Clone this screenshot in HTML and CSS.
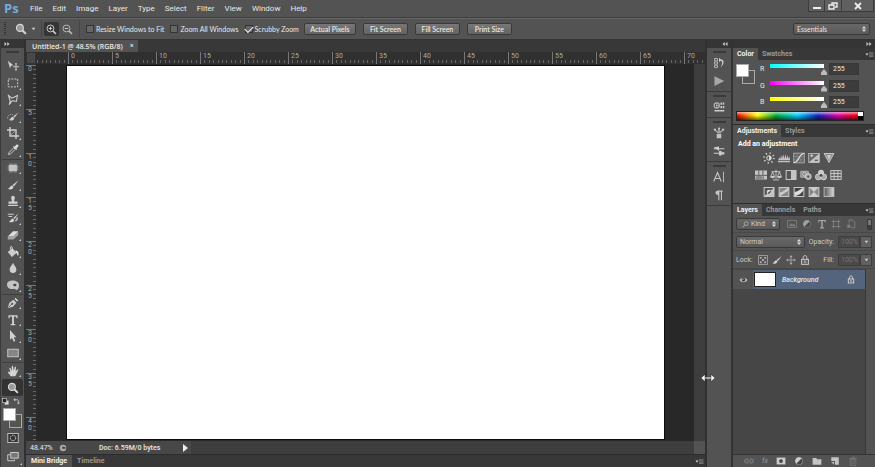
FILE: index.html
```html
<!DOCTYPE html>
<html lang="en">
<head>
<meta charset="utf-8">
<title>Untitled-1</title>
<link rel="stylesheet" href="styles.css">
</head>
<body>
<svg class="defs" aria-hidden="true">
  <symbol id="lens" viewBox="0 0 16 16"><circle cx="6.5" cy="6.5" r="4.6" fill="#999" stroke="#d8d8d8" stroke-width="1.5"/><path d="M10 10l4.5 4.5" stroke="#d8d8d8" stroke-width="2.6"/></symbol>
  <symbol id="lens-in" viewBox="0 0 16 16"><circle cx="6.5" cy="6.5" r="5" fill="none" stroke="#ccc" stroke-width="1.4"/><path d="M10 10l4.5 4.5" stroke="#ccc" stroke-width="2.4"/><path d="M4 6.5h5M6.500 4v5" stroke="#ddd" stroke-width="1.3"/></symbol>
  <symbol id="lens-out" viewBox="0 0 16 16"><circle cx="6.500" cy="6.500" r="5" fill="none" stroke="#bbb" stroke-width="1.4"/><path d="M10 10l4.500 4.500" stroke="#bbb" stroke-width="2.4"/><path d="M4 6.500h5" stroke="#ddd" stroke-width="1.300"/></symbol>
  <symbol id="move" viewBox="0 0 16 16"><path d="M1 1l7.500 6-3 .7L4 11 1 1z" fill="#ccc"/><path d="M12 5v8M8 9h8" stroke="#ccc" stroke-width="1.300"/><path d="M12 3.500l1.700 2.300h-3.400zM12 14.500l1.700-2.300h-3.400z" fill="#ccc"/></symbol>
  <symbol id="marquee" viewBox="0 0 16 16"><rect x="1.700" y="2.700" width="12.500" height="10.500" fill="none" stroke="#d0d0d0" stroke-width="1.300" stroke-dasharray="2.600 1.600"/></symbol>
  <symbol id="lasso" viewBox="0 0 16 16"><path d="M2 2l4.500 3.500L14 2l-1.500 8-5-1-3 1.500zM4.500 10.500c-2 1-.5 3 .5 1.500s-1.500-1.500-2 2.500" fill="none" stroke="#d0d0d0" stroke-width="1.400"/></symbol>
  <symbol id="quick" viewBox="0 0 16 16"><path d="M15 2L8.500 7l1.500 2zM8 7.500c-3 .5-3 3.500-5.500 4.500 3.500 1.500 7 0 7-2.500z" fill="#d0d0d0"/><path d="M1 10C0 6 4 4 8 5" fill="none" stroke="#ccc" stroke-dasharray="1.500 1.500"/></symbol>
  <symbol id="crop" viewBox="0 0 16 16"><path d="M4 0v12h12M0 4h12v12" fill="none" stroke="#d0d0d0" stroke-width="1.800"/><path d="M5 11l6.500-6.500" stroke="#aaa"/></symbol>
  <symbol id="dropper" viewBox="0 0 16 16"><path d="M2 14l1-3 6-6 2 2-6 6z" fill="none" stroke="#ccc" stroke-width="1.300"/><path d="M8 3.500L12.500 8l1-1-1-1L15 3.500C16 1.500 14 0 12.500 1L10 3.500l-1-1z" fill="#ddd"/></symbol>
  <symbol id="heal" viewBox="0 0 16 16"><path d="M4 2v12M6.500 2v12M9.500 2v12M12 2v12M1 5.500h14M1 8h14M1 10.500h14" stroke="#bbb" stroke-width="1.200"/><rect x="3" y="4" width="10" height="8" rx="1" fill="#c4c4c4"/></symbol>
  <symbol id="brush" viewBox="0 0 16 16"><path d="M15.500 1.500L7.500 8l1.700 2zM7 8.500c-2.500 0-2.500 3-6 4.500 3.500 2 7.500.5 7.500-2.500z" fill="#d4d4d4"/></symbol>
  <symbol id="stamp" viewBox="0 0 16 16"><path d="M5.500 3.500a2.500 2.500 0 015 0c0 2-1 2.500-1 5H14v3H2v-3h4.500c0-2.500-1-3-1-5zM1.500 13h13v1.500h-13z" fill="#d0d0d0"/></symbol>
  <symbol id="history" viewBox="0 0 16 16"><path d="M15.500 1.500L8.500 8l1.500 1.500zM8 8.500c-2.500 0-2.500 3-5.500 4.500 3.500 1.500 7 .5 7-2.500z" fill="#d4d4d4"/><path d="M1 3h8M2 6h5M11 12c2.500-1 3-3 2.500-5" fill="none" stroke="#ccc" stroke-width="1.600"/></symbol>
  <symbol id="eraser" viewBox="0 0 16 16"><path d="M1 10l7-7h7L8.500 10z" fill="#ddd"/><path d="M1 10h7.500v4H1zM8.500 10L15 3v5l-6.500 6z" fill="#a4a4a4"/></symbol>
  <symbol id="bucket" viewBox="0 0 16 16"><path d="M1 8l6-5 6 6-6.500 5.500z" fill="#ccc"/><path d="M7 8V2.500C7 0 4.500 0 4.500 2.500V5" fill="none" stroke="#ddd" stroke-width="1.200"/><path d="M11 6c4 0 5 3 4 7-2 0-1-3-3-4z" fill="#ddd"/></symbol>
  <symbol id="drop" viewBox="0 0 16 16"><path d="M8 1c1.500 4 4.500 5.500 4.500 9a4.500 4.500 0 01-9 0C3.500 6.500 6.500 5 8 1z" fill="#cfcfcf"/></symbol>
  <symbol id="sponge" viewBox="0 0 16 16"><path d="M0 7c0-7 16-7 16 1 0 4-1 6.500-3.500 6.500-1.500 0-1-1.500-2.500-1.500C5 14 0 13 0 7z" fill="#c4c4c4"/><ellipse cx="10.500" cy="8" rx="2.200" ry="1.700" fill="#444"/></symbol>
  <symbol id="pen" viewBox="0 0 16 16"><path d="M1 15L3 8l5.500-4.500 4 4L8 13z" fill="#ccc"/><path d="M9.500 2.500L11.500.5l4 4-2 2zM2 14l4.500-4.500" fill="#ddd" stroke="#444"/><circle cx="7" cy="9" r="1.200" fill="#444"/></symbol>
  <symbol id="type" viewBox="0 0 16 16"><path d="M2 1.500h12v4h-1.300L12 3.200H9.200v10l2 .5V15H4.800v-1.300l2-.5v-10H4l-.7 2.300H2z" fill="#d4d4d4"/></symbol>
  <symbol id="arrow" viewBox="0 0 16 16"><path d="M4 0l8.500 9.500H9l2 5-2 1-2.300-5L4 13z" fill="#d0d0d0"/></symbol>
  <symbol id="rect" viewBox="0 0 16 16"><rect x="1" y="3" width="14" height="10" fill="#858585" stroke="#c4c4c4" stroke-width="1.300"/></symbol>
  <symbol id="hand" viewBox="0 0 16 16"><path d="M5 15L1 9.500l1-1L4.500 10 3 4l1.500-.5L6.500 8 6.300 1.500 8 1l1 6.500L10.500 2l1.500.5-.5 6L14 5.500l1.200.8L12.500 12 11 15z" fill="#d4d4d4"/></symbol>
  <symbol id="flip" viewBox="0 0 16 16"><path d="M4 4h5c3 0 4 2 4 6" fill="none" stroke="#ccc" stroke-width="2"/><path d="M5 0v8L1 4zM9 10h7l-3.500 5z" fill="#ccc"/></symbol>
  <symbol id="default" viewBox="0 0 16 16"><rect x="6" y="6" width="9" height="9" fill="#ddd"/><rect x="1.500" y="1.500" width="9" height="9" fill="#222" stroke="#ccc" stroke-width="1.500"/></symbol>
  <symbol id="mask" viewBox="0 0 16 16"><rect x="1" y="2" width="14" height="12" fill="#333" stroke="#bbb" stroke-width="1.300"/><circle cx="8" cy="8" r="3.600" fill="none" stroke="#ddd" stroke-width="1.300" stroke-dasharray="2 1"/></symbol>
  <symbol id="screens" viewBox="0 0 16 16"><rect x="5" y="2" width="10" height="7.500" fill="#777" stroke="#ccc" stroke-width="1.300"/><path d="M4 5H1v8h9v-2" fill="none" stroke="#ccc" stroke-width="1.300"/></symbol>
  <symbol id="hist" viewBox="0 0 16 16"><path d="M2 2h4v3H2zM2 6.500h4v3H2zM2 11h4v3H2z" fill="none" stroke="#bbb" stroke-width="1.200"/><path d="M8 1v6l2-2c3 0 3 4 0 9 6-5 5-11 0-11z" fill="#ccc"/></symbol>
  <symbol id="play" viewBox="0 0 16 16"><path d="M2 1.500L15 8 2 14.500z" fill="#a8a8a8"/></symbol>
  <symbol id="bridge" viewBox="0 0 16 16"><circle cx="5" cy="6" r="3.500" fill="none" stroke="#bbb" stroke-width="1.400"/><path d="M4 6h4M5 4v5" stroke="#bbb"/><path d="M10 2h2v3h-2zM13 2h2v3h-2zM10 6.500h2v3h-2zM13 6.500h2v3h-2zM2 12h13v2H2z" fill="#ccc"/></symbol>
  <symbol id="brushes" viewBox="0 0 16 16"><path d="M5 9h6v6H5zM7 8L7.300 3h1.400L9 8zM6 8L2 4l1-1 4 4zM10 8l4-4-1-1-4 4z" fill="#c4c4c4"/><circle cx="2.500" cy="3.500" r="1.500" fill="#c4c4c4"/><circle cx="13.500" cy="3.500" r="1.500" fill="#c4c4c4"/><circle cx="8" cy="2" r="1.500" fill="#c4c4c4"/></symbol>
  <symbol id="presets" viewBox="0 0 16 16"><path d="M1 5h14M1 11h14" stroke="#ccc" stroke-width="1.400"/><path d="M1 3l7-1v6zM8 8h3.500v6H8zM11 9.500h4v3h-4z" fill="#ccc"/></symbol>
  <symbol id="char" viewBox="0 0 16 16"><path d="M1 14L6 2l5 12M3 10h6" fill="none" stroke="#c4c4c4" stroke-width="1.500"/><path d="M14 1v14" stroke="#bbb" stroke-width="1.300"/></symbol>
  <symbol id="para" viewBox="0 0 16 16"><path d="M13 2H7C2 2 2 8 7 8v7h1.500V3.500h2V15H12V3.500h1z" fill="#c4c4c4"/></symbol>
  <symbol id="sun" viewBox="0 0 16 16"><circle cx="8" cy="8" r="6.500" fill="none" stroke="#ccc" stroke-width="2.500" stroke-dasharray="1.600 3.500"/><circle cx="8" cy="8" r="3" fill="none" stroke="#ddd" stroke-width="1.300"/><path d="M8 5a3 3 0 010 6z" fill="#ddd"/></symbol>
  <symbol id="levels" viewBox="0 0 16 16"><path d="M0 11L2 7l1 3 1-6 1.500 5L7 3l1.500 6L10 3l1.500 6L13 4l1 5 1.500-3L16 11zM0 12h16v1.500H0z" fill="#c4c4c4"/></symbol>
  <symbol id="curves" viewBox="0 0 16 16"><rect x="1" y="1.500" width="14" height="13" fill="#666" stroke="#bbb"/><path d="M5.500 2v12M10.500 2v12M1 6h14M1 10.500h14" stroke="#888"/><path d="M1 14C9 14 7 2 15 2" fill="none" stroke="#eee" stroke-width="1.500"/></symbol>
  <symbol id="exposure" viewBox="0 0 16 16"><rect x="1" y="2" width="14" height="12" fill="#666" stroke="#ccc"/><path d="M15 2v12H1z" fill="#c4c4c4"/><path d="M3 5h4M5 3v4" stroke="#eee"/><path d="M9 11h4" stroke="#333" stroke-width="1.300"/></symbol>
  <symbol id="vibrance" viewBox="0 0 16 16"><path d="M1.500 2h13L8 14z" fill="#888" stroke="#ccc" stroke-width="1.300"/><path d="M5 4h6L8 11z" fill="#ccc"/></symbol>
  <symbol id="hue" viewBox="0 0 16 16"><path d="M0 2h16v12H0z" fill="#c4c4c4"/><path d="M5 2v6M10.500 2v6M0 8.500h16M5 10v3M11 10v3" stroke="#555" stroke-width="1.200"/><path d="M1 9.500h9v4H1z" fill="#888"/></symbol>
  <symbol id="scales" viewBox="0 0 16 16"><path d="M8 1v12M2 3.500h12M4 14.500h8M3.500 4L1 10h5zM12.500 4L10 10h5z" fill="none" stroke="#ccc" stroke-width="1.200"/><path d="M0 10h7c-1 3-6 3-7 0zM9 10h7c-1 3-6 3-7 0z" fill="#ccc"/></symbol>
  <symbol id="bw" viewBox="0 0 16 16"><rect x="1.500" y="2" width="13" height="12" fill="#555" stroke="#ccc" stroke-width="1.300"/><path d="M8 2h7v12H8z" fill="#c4c4c4"/></symbol>
  <symbol id="photo" viewBox="0 0 16 16"><path d="M1 3h10v8H1z" fill="#888" stroke="#ccc"/><circle cx="6" cy="7" r="2.500" fill="none" stroke="#ddd"/><circle cx="11" cy="10" r="4" fill="#aaa" stroke="#ddd"/><circle cx="11" cy="10" r="1.500" fill="#555"/></symbol>
  <symbol id="mixer" viewBox="0 0 16 16"><circle cx="8" cy="5" r="4" fill="#ccc"/><circle cx="4.500" cy="10.500" r="4" fill="#aaa" stroke="#ddd"/><circle cx="11.500" cy="10.500" r="4" fill="#aaa" stroke="#ddd"/><circle cx="8" cy="8.500" r="1.800" fill="#444"/></symbol>
  <symbol id="lut" viewBox="0 0 16 16"><path d="M1 2h14v12H1zM1 6h14M1 10h14M5.500 2v12M10.500 2v12" fill="#666" stroke="#ccc" stroke-width="1.200"/></symbol>
  <symbol id="invert" viewBox="0 0 16 16"><rect x="1.500" y="2" width="13" height="12" fill="#555" stroke="#ccc" stroke-width="1.300"/><path d="M15 2v12H1z" fill="#c4c4c4"/><circle cx="8" cy="8" r="3" fill="#ddd"/><path d="M10 6a3 3 0 01-4 4z" fill="#333"/></symbol>
  <symbol id="poster" viewBox="0 0 16 16"><rect x="1.500" y="2" width="13" height="12" fill="#888" stroke="#ccc" stroke-width="1.300"/><path d="M2 9l5-2 7-5v4L8 10l-6 4z" fill="#ccc"/></symbol>
  <symbol id="thresh" viewBox="0 0 16 16"><rect x="1.500" y="2" width="13" height="12" fill="#444" stroke="#ccc" stroke-width="1.300"/><path d="M2 8l4-1 3-2 5-3v4L9 11l-7 3z" fill="#ddd"/></symbol>
  <symbol id="selective" viewBox="0 0 16 16"><rect x="1.500" y="2" width="13" height="12" fill="#888" stroke="#ccc" stroke-width="1.300"/><path d="M2 2l6 6 6-6z" fill="#ccc"/><path d="M2 14l6-6 6 6z" fill="#ccc"/></symbol>
  <symbol id="gradmap" viewBox="0 0 16 16"><defs><linearGradient id="gm"><stop stop-color="#555"/><stop offset="1" stop-color="#ddd"/></linearGradient></defs><rect x="1.500" y="2" width="13" height="12" fill="url(#gm)" stroke="#bbb" stroke-width="1.300"/></symbol>
  <symbol id="pic" viewBox="0 0 16 16"><rect x="1" y="2.500" width="14" height="11" fill="none" stroke="#999" stroke-width="1.300"/><path d="M3 11.500l3-5 2 3 3-2 3 4z" fill="#999"/></symbol>
  <symbol id="adj" viewBox="0 0 16 16"><circle cx="8" cy="8" r="5.500" fill="#ccc" stroke="#ccc" stroke-width="1.500"/><path d="M12 4a5.500 5.500 0 01-8 8z" fill="#444"/></symbol>
  <symbol id="shape" viewBox="0 0 16 16"><path d="M4 1v14M12 1v14M1 4h14M1 12h14" stroke="#999" stroke-width="1.500"/></symbol>
  <symbol id="smart" viewBox="0 0 16 16"><path d="M5 7V1.500h5.500L14 5v9H8" fill="none" stroke="#999" stroke-width="1.500"/><path d="M2 9h5v5H2z" fill="#999"/></symbol>
  <symbol id="checker" viewBox="0 0 16 16"><rect x="1" y="1" width="14" height="14" fill="none" stroke="#aaa" stroke-width="1.300"/><path d="M3 3h3v3H3zM10 3h3v3h-3zM6.500 6.500h3v3h-3zM3 10h3v3H3zM10 10h3v3h-3z" fill="#aaa"/></symbol>
  <symbol id="cross" viewBox="0 0 16 16"><path d="M8 3v10M3 8h10" stroke="#aaa" stroke-width="1.300"/><path d="M8 0l2.500 3.500h-5zM8 16l2.500-3.500h-5zM0 8l3.500-2.500v5zM16 8l-3.500-2.500v5z" fill="#aaa"/></symbol>
  <symbol id="lock" viewBox="0 0 16 16"><rect x="2.500" y="7" width="11" height="8" fill="#666" stroke="currentColor" stroke-width="1.500"/><path d="M5 7V4c0-4 6-4 6 0v3M8 9v4" fill="none" stroke="currentColor" stroke-width="1.600"/></symbol>
  <symbol id="eye" viewBox="0 0 16 16"><path d="M0 8c4-6 12-6 16 0-4 6-12 6-16 0z" fill="#bbb"/><circle cx="8" cy="7.500" r="3.600" fill="#333"/><circle cx="7" cy="6.500" r="1.200" fill="#ddd"/></symbol>
  <symbol id="link" viewBox="0 0 16 16"><path d="M7 5H4a3 3 0 000 6h3M9 5h3a3 3 0 010 6H9M5 8h6" fill="none" stroke="#888" stroke-width="1.500"/></symbol>
  <symbol id="addmask" viewBox="0 0 16 16"><path d="M1 2.500h14v11H1z" fill="#ccc"/><circle cx="8" cy="8" r="3" fill="#444"/></symbol>
  <symbol id="folder" viewBox="0 0 16 16"><path d="M1 3h6l1 2h7v9H1z" fill="#c4c4c4"/></symbol>
  <symbol id="new" viewBox="0 0 16 16"><path d="M2 2h12v12H8V8H2z" fill="#c4c4c4"/><path d="M2 9.500h4.500V14z" fill="#c4c4c4"/></symbol>
  <symbol id="trash" viewBox="0 0 16 16"><path d="M2 4h12M6 3V1.500h4V3M3.500 5.500h9V15h-9zM6.500 7v6M9.500 7v6" fill="none" stroke="#777" stroke-width="1.300"/></symbol>
  <symbol id="menu" viewBox="0 0 16 10"><path d="M0 3h6L3 7z" fill="#ddd"/><path d="M7 1.500h9M7 4h9M7 6.500h9M7 9h9" stroke="#999" stroke-width="1.200"/></symbol>
  <symbol id="updown" viewBox="0 0 8 12"><path d="M0 5l4-5 4 5zM0 7l4 5 4-5z" fill="#ddd"/></symbol>
  <symbol id="rewind" viewBox="0 0 12 8"><path d="M5.500 0v8L1 4zM11 0v8L6.500 4z" fill="#ccc"/></symbol>
  <symbol id="forward" viewBox="0 0 12 8"><path d="M1 0v8l4.500-4zM6.500 0v8L11 4z" fill="#ccc"/></symbol>
  <symbol id="search" viewBox="0 0 16 16"><circle cx="9.500" cy="6" r="4.500" fill="none" stroke="#bbb" stroke-width="1.500"/><path d="M6 9.500l-5 5" stroke="#bbb" stroke-width="2"/></symbol>
  <symbol id="caret" viewBox="0 0 8 6"><path d="M1 1h6L4 5z" fill="#ccc"/></symbol>
</svg>

<header class="menubar">
  <span class="logo">Ps</span>
  <nav class="menus">
    <a href="#">File</a><a href="#">Edit</a><a href="#">Image</a><a href="#">Layer</a><a href="#">Type</a><a href="#">Select</a><a href="#">Filter</a><a href="#">View</a><a href="#">Window</a><a href="#">Help</a>
  </nav>
  <div class="winbtns">
    <button aria-label="Minimize"><svg viewBox="0 0 10 8"><path d="M1 5h8v2H1z" fill="#eee"/></svg></button>
    <button aria-label="Restore"><svg viewBox="0 0 10 8"><path d="M4 3V1h5v4H7M1 3h5v4H1z" fill="none" stroke="#eee" stroke-width="1.400"/></svg></button>
    <button class="close" aria-label="Close"><svg viewBox="0 0 10 8"><path d="M2 1l6 6M8 1L2 7" stroke="#eee" stroke-width="1.800"/></svg></button>
  </div>
</header>

<section class="options">
  <span class="handle"></span>
  <button class="current" aria-label="Zoom tool"><svg class="i12"><use href="#lens"/></svg><svg class="caret"><use href="#caret"/></svg></button>
  <div class="pair">
    <button class="sq on" aria-label="Zoom in"><svg class="i11"><use href="#lens-in"/></svg></button>
    <button class="sq" aria-label="Zoom out"><svg class="i11"><use href="#lens-out"/></svg></button>
  </div>
  <div class="checks">
    <label><input type="checkbox">Resize Windows to Fit</label>
    <label><input type="checkbox">Zoom All Windows</label>
    <label><input type="checkbox" checked>Scrubby Zoom</label>
  </div>
  <div class="btns">
    <button class="wide">Actual Pixels</button><button>Fit Screen</button><button>Fill Screen</button><button>Print Size</button>
  </div>
  <span class="select workspace"><select aria-label="Workspace"><option>Essentials</option></select><svg><use href="#updown"/></svg></span>
</section>

<main class="work">
  <aside class="toolbox">
    <div class="strip-head"><svg><use href="#forward"/></svg></div>
    <span class="grip"></span>
    <div class="tools">
      <button aria-label="Move"><svg><use href="#move"/></svg></button>
      <button class="more" aria-label="Marquee"><svg><use href="#marquee"/></svg></button>
      <button class="more" aria-label="Lasso"><svg><use href="#lasso"/></svg></button>
      <button class="more" aria-label="Quick selection"><svg><use href="#quick"/></svg></button>
      <button class="more" aria-label="Crop"><svg><use href="#crop"/></svg></button>
      <button class="more" aria-label="Eyedropper"><svg><use href="#dropper"/></svg></button>
      <hr>
      <button class="more" aria-label="Healing"><svg><use href="#heal"/></svg></button>
      <button class="more" aria-label="Brush"><svg><use href="#brush"/></svg></button>
      <button class="more" aria-label="Stamp"><svg><use href="#stamp"/></svg></button>
      <button class="more" aria-label="History brush"><svg><use href="#history"/></svg></button>
      <button class="more" aria-label="Eraser"><svg><use href="#eraser"/></svg></button>
      <button class="more" aria-label="Paint bucket"><svg><use href="#bucket"/></svg></button>
      <button class="more" aria-label="Blur"><svg><use href="#drop"/></svg></button>
      <button class="more" aria-label="Sponge"><svg><use href="#sponge"/></svg></button>
      <hr>
      <button class="more" aria-label="Pen"><svg><use href="#pen"/></svg></button>
      <button class="more" aria-label="Type"><svg><use href="#type"/></svg></button>
      <button class="more" aria-label="Path selection"><svg><use href="#arrow"/></svg></button>
      <button class="more" aria-label="Rectangle"><svg><use href="#rect"/></svg></button>
      <hr>
      <button class="more" aria-label="Hand"><svg><use href="#hand"/></svg></button>
      <button class="on" aria-label="Zoom"><svg><use href="#lens"/></svg></button>
    </div>
    <div class="mini"><svg><use href="#default"/></svg><svg><use href="#flip"/></svg></div>
    <div class="swatches"><button class="bg" aria-label="Background colour"></button><button class="fg" aria-label="Foreground colour"></button></div>
    <div class="modes">
      <button aria-label="Quick mask"><svg><use href="#mask"/></svg></button>
      <button class="more" aria-label="Screen mode"><svg><use href="#screens"/></svg></button>
    </div>
  </aside>

  <section class="document">
    <div class="doctabs"><div class="doctab">Untitled-1 @ 48.5% (RGB/8)<button aria-label="Close tab">×</button></div></div>
    <div class="view">
      <div class="corner"></div>
      <div class="hruler"><span>0</span><span>5</span><span>10</span><span>15</span><span>20</span><span>25</span><span>30</span><span>35</span><span>40</span><span>45</span><span>50</span><span>55</span><span>60</span><span>65</span><span>70</span></div>
      <div class="vruler"><span>0</span><span>5</span><span>1<br>0</span><span>1<br>5</span><span>2<br>0</span><span>2<br>5</span><span>3<br>0</span><span>3<br>5</span><span>4<br>0</span></div>
      <div class="stage"><div class="canvas"></div></div>
      <div class="vscroll"></div>
    </div>
    <div class="status">
      <span class="pct">48.47%</span>
      <span class="stat-icon"><svg viewBox="0 0 10 10"><circle cx="5" cy="5" r="4" fill="#aaa"/><path d="M4 3v3h4V4z" fill="#444"/></svg></span>
      <span class="docsize">Doc: 6.59M/0 bytes</span>
      <button aria-label="Status menu"><svg viewBox="0 0 8 8"><path d="M2 0l5 4-5 4z" fill="#eee"/></svg></button>
      <span class="hscroll"></span><span class="scorner"></span>
    </div>
    <div class="bottomtabs"><a class="on" href="#">Mini Bridge</a><a href="#">Timeline</a><svg class="menu"><use href="#menu"/></svg></div>
  </section>

  <aside class="dock">
    <div class="strip-head right"><svg><use href="#rewind"/></svg></div>
    <div class="group"><span class="grip"></span><button aria-label="History"><svg><use href="#hist"/></svg></button><button aria-label="Actions"><svg><use href="#play"/></svg></button></div>
    <div class="group"><span class="grip"></span><button aria-label="Extensions"><svg><use href="#bridge"/></svg></button></div>
    <div class="group"><span class="grip"></span><button aria-label="Brush settings"><svg><use href="#brushes"/></svg></button><button aria-label="Brush presets"><svg><use href="#presets"/></svg></button></div>
    <div class="group"><span class="grip"></span><button aria-label="Character"><svg><use href="#char"/></svg></button><button aria-label="Paragraph"><svg><use href="#para"/></svg></button></div>
    <svg class="cursor" viewBox="0 0 14 8"><path d="M3 4h8" stroke="#fff" stroke-width="1"/><path d="M0 4l4-3.500v7zM14 4l-4-3.500v7z" fill="#fff" stroke="#111" stroke-width=".4"/></svg>
  </aside>

  <aside class="panels">
    <div class="strip-head right"><svg><use href="#forward"/></svg></div>
    <section class="panel">
      <div class="tabs"><a class="on" href="#">Color</a><a href="#">Swatches</a><svg class="menu"><use href="#menu"/></svg></div>
      <div class="color">
        <div class="colorrow">
          <div class="swatches"><button class="bg" aria-label="Background colour"></button><button class="fg" aria-label="Foreground colour"></button></div>
          <div class="channels">
            <label for="r">R</label><input class="cyan" id="r" type="range" max="255" value="255"><input type="text" value="255" aria-label="Red value">
            <label for="g">G</label><input class="magenta" id="g" type="range" max="255" value="255"><input type="text" value="255" aria-label="Green value">
            <label for="b">B</label><input class="yellow" id="b" type="range" max="255" value="255"><input type="text" value="255" aria-label="Blue value">
          </div>
        </div>
        <div class="ramp"><span class="hues"></span><span class="ends"></span></div>
      </div>
    </section>
    <section class="panel">
      <div class="tabs"><a class="on" href="#">Adjustments</a><a href="#">Styles</a><svg class="menu"><use href="#menu"/></svg></div>
      <div class="adjust">
        <h2>Add an adjustment</h2>
        <div class="icons"><svg><use href="#sun"/></svg><svg><use href="#levels"/></svg><svg><use href="#curves"/></svg><svg><use href="#exposure"/></svg><svg><use href="#vibrance"/></svg></div>
        <div class="icons"><svg><use href="#hue"/></svg><svg><use href="#scales"/></svg><svg><use href="#bw"/></svg><svg><use href="#photo"/></svg><svg><use href="#mixer"/></svg><svg><use href="#lut"/></svg></div>
        <div class="icons"><svg><use href="#invert"/></svg><svg><use href="#poster"/></svg><svg><use href="#thresh"/></svg><svg><use href="#selective"/></svg><svg><use href="#gradmap"/></svg></div>
      </div>
    </section>
    <section class="panel layers">
      <div class="tabs"><a class="on" href="#">Layers</a><a href="#">Channels</a><a href="#">Paths</a><svg class="menu"><use href="#menu"/></svg></div>
      <div class="lrow filter">
        <span class="select kind"><svg class="mag"><use href="#search"/></svg><select aria-label="Filter kind"><option>Kind</option></select><svg><use href="#updown"/></svg></span>
        <div class="ficons"><svg><use href="#pic"/></svg><svg><use href="#adj"/></svg><svg><use href="#type"/></svg><svg><use href="#shape"/></svg><svg><use href="#smart"/></svg></div>
        <span class="switch"></span>
      </div>
      <div class="lrow">
        <span class="select blend"><select aria-label="Blend mode"><option>Normal</option></select><svg><use href="#updown"/></svg></span>
        <label for="op">Opacity:</label>
        <span class="num"><input id="op" type="text" value="100%" disabled><button aria-label="Opacity slider"><svg><use href="#caret"/></svg></button></span>
      </div>
      <div class="lrow">
        <span>Lock:</span>
        <div class="locks"><svg><use href="#checker"/></svg><svg><use href="#brush"/></svg><svg><use href="#cross"/></svg><svg><use href="#lock"/></svg></div>
        <label for="fill">Fill:</label>
        <span class="num"><input id="fill" type="text" value="100%" disabled><button aria-label="Fill slider"><svg><use href="#caret"/></svg></button></span>
      </div>
      <div class="list">
        <div class="layer">
          <span class="vis"><svg><use href="#eye"/></svg></span>
          <span class="lbody"><span class="thumb"></span><em>Background</em><svg><use href="#lock"/></svg></span>
        </div>
      </div>
      <div class="lfoot"><svg><use href="#link"/></svg><i>fx</i><svg><use href="#addmask"/></svg><svg><use href="#adj"/></svg><svg><use href="#folder"/></svg><svg><use href="#new"/></svg><svg><use href="#trash"/></svg></div>
    </section>
  </aside>
</main>
</body>
</html>
```
FILE: styles.css
```css
* { box-sizing: border-box; }
html, body { height: 100%; margin: 0; }
body {
  display: flex;
  flex-direction: column;
  overflow: hidden;
  background: #333;
  color: #e8e8e8;
  font: 7px/10px Roboto, "Noto Sans", sans-serif;
}
button, input, select { font: inherit; color: inherit; margin: 0; padding: 0; border: 0; background: none; border-radius: 0; }
a { color: inherit; text-decoration: none; }
svg { display: block; flex: none; }
.defs { position: absolute; width: 0; height: 0; }

/* menu bar */
.menubar {
  flex: none;
  display: flex;
  height: 18px;
  background: #535353;
  border-bottom: 1px solid #3e3e3e;
}
.logo { width: 30px; padding-left: 4px; font: bold 13px/17px "Open Sans", sans-serif; color: #72ace0; }
.menus { flex: 1; display: flex; gap: 10px; font-size: 8px; line-height: 18px; }
.winbtns { display: flex; height: 12px; padding-right: 1px; }
.winbtns button { width: 17px; display: grid; place-items: center; background: #606060; border: 1px solid #3c3c3c; border-top: 0; border-left-width: 0; }
.winbtns button:first-child { border-left-width: 1px; }
.winbtns .close { width: 32px; }
.winbtns svg { width: 10px; height: 8px; }

/* option bar */
.options {
  flex: none;
  display: flex;
  align-items: center;
  height: 22px;
  padding: 0 5px 0 4px;
  background: #535353;
  border-top: 1px solid #666;
  border-bottom: 1px solid #333;
  font-family: Lato, sans-serif;
}
.handle { width: 2px; height: 14px; margin-right: 9px; background: repeating-linear-gradient(#333 0 1px, transparent 1px 2px); }
.i12 { width: 12px; height: 12px; }
.i11 { width: 11px; height: 11px; }
.caret { width: 5px; height: 4px; }
.current { display: flex; align-items: center; gap: 4px; width: 26px; height: 16px; }
.pair { display: flex; gap: 1px; width: 39px; height: 16px; padding: 1px 2px; border: 1px solid #444; border-width: 0 1px; }
.sq { width: 15px; height: 14px; display: grid; place-items: center; border-radius: 2px; }
.sq.on { background: #353535; }
.checks { display: flex; gap: 6px; margin-left: 6px; }
.checks label { display: flex; align-items: center; gap: 2px; }
.checks input { appearance: none; width: 8px; height: 8px; border: 1px solid #333; background: #666; display: grid; justify-content: center; }
.checks input:checked::before { content: ""; width: 7px; height: 4px; border: solid #fff; border-width: 0 0 1px 1px; transform: rotate(-45deg); }
.btns { display: flex; gap: 7px; margin-left: 5px; }
.btns button { width: 45px; height: 12px; border: 1px solid #3a3a3a; border-radius: 2px; background: linear-gradient(#777, #636363); font-weight: 600; line-height: 10px; }
.btns .wide { width: 52px; }
.select { display: flex; align-items: center; height: 12px; border: 1px solid #3a3a3a; border-radius: 2px; background: linear-gradient(#686868, #5a5a5a); padding: 0 3px; }
.select select { flex: 1; min-width: 0; height: 10px; appearance: none; }
.select svg { width: 4px; height: 6px; }
.select .mag { width: 7px; height: 7px; margin: 0 2px; }
.workspace { width: 77px; margin-left: auto; }

/* workspace */
.work { flex: 1; min-height: 0; display: grid; grid-template-columns: 24px 1fr 25px 143px; }
.work > * { min-height: 0; }
.strip-head { flex: none; display: flex; align-items: center; height: 8px; padding: 0 3px; background: #353535; }
.strip-head.right { justify-content: flex-end; }
.strip-head svg { width: 6px; height: 4px; }
.grip { align-self: center; width: 13px; height: 2px; border: 1px solid #3a3a3a; border-width: 1px 0; }

.toolbox { display: flex; flex-direction: column; background: #535353; border-left: 1px solid #3a3a3a; }
.toolbox > .grip { margin: 3px 0 5px; }
.tools { flex: 1; min-height: 0; display: flex; flex-direction: column; padding: 0 1px; }
.tools hr { width: 100%; height: 1px; margin: 0; border: 0; background: #3e3e3e; }
.tools button, .modes button { flex: 1; min-height: 0; display: grid; place-items: center; position: relative; }
.tools svg { width: 12px; height: 12px; }
.tools .on { background: #333; border-radius: 2px; }
.more::after { content: ""; position: absolute; right: 2px; bottom: 2px; border: 1px solid #ccc; border-left-color: transparent; border-top-color: transparent; }
.mini { display: flex; gap: 4px; padding: 2px 1px 0; height: 12px; }
.mini svg { width: 7px; height: 7px; }
.swatches { display: grid; grid-template-columns: 6px 7px 6px; grid-template-rows: 6px 7px 7px; }
.swatches button { border: 1px solid #aaa; }
.swatches .fg { grid-area: 1 / 1 / 3 / 3; background: #fff; }
.swatches .bg { grid-area: 2 / 2 / 4 / 4; background: #555550; }
.toolbox .swatches { margin-left: 2px; }
.modes { height: 39px; display: flex; flex-direction: column; }
.modes svg { width: 12px; height: 12px; }

/* document */
.document { display: flex; flex-direction: column; min-width: 0; border: solid #303030; border-width: 0 2px; }
.doctabs { flex: none; height: 12px; background: #383838; display: flex; }
.doctab { display: flex; gap: 6px; padding: 0 3px 0 6px; background: #535353; font-family: "Open Sans", sans-serif; line-height: 13px; font-weight: 600; }
.doctab button { width: 6px; line-height: 12px; }
.view { flex: 1; min-height: 0; display: grid; grid-template: 12px 1fr / 10px 1fr 11px; background: #282828; }
.corner { background: #484848; border: 1px solid #333; }
.hruler {
  grid-column: 2 / 4;
  display: flex;
  overflow: hidden;
  padding-left: 32px;
  background:
    linear-gradient(90deg, #777 1px, transparent 1px) 32px 0 / 44px 12px,
    linear-gradient(90deg, transparent 4px, #666 4px 5px, transparent 5px 9px, #666 9px 10px, transparent 10px 13px, #666 13px 14px, transparent 14px 18px, #666 18px 19px, transparent 19px 22px, #666 22px 23px, transparent 23px 26px, #666 26px 27px, transparent 27px 31px, #666 31px 32px, transparent 32px 35px, #666 35px 36px, transparent 36px 40px, #666 40px 41px, transparent 41px) 32px 8px / 44px 3px repeat-x,
    #303030;
  color: #aaa;
}
.hruler span { flex: none; width: 44px; padding-left: 3px; line-height: 8px; }
.vruler {
  overflow: hidden;
  padding-top: 1px;
  background:
    linear-gradient(#777 1px, transparent 1px) 0 1px / 10px 44px,
    linear-gradient(transparent 4px, #666 4px 5px, transparent 5px 9px, #666 9px 10px, transparent 10px 13px, #666 13px 14px, transparent 14px 18px, #666 18px 19px, transparent 19px 22px, #666 22px 23px, transparent 23px 26px, #666 26px 27px, transparent 27px 31px, #666 31px 32px, transparent 32px 35px, #666 35px 36px, transparent 36px 40px, #666 40px 41px, transparent 41px) 7px 1px / 3px 44px repeat-y,
    #303030;
  color: #aaa;
}
.vruler span { display: block; height: 44px; padding: 1px 0 0 2px; line-height: 7px; }
.stage { display: flex; padding: 2px 30px 2px 31px; }
.canvas { flex: 1; background: #fff; outline: 1px solid #0c0c0c; }
.vscroll { background: #3e3e3e; }
.status { flex: none; display: flex; align-items: center; height: 13px; background: #484848; }
.pct { width: 33px; padding-left: 4px; }
.stat-icon { width: 12px; }
.stat-icon svg { width: 8px; height: 8px; }
.docsize { width: 108px; padding-left: 28px; font-weight: 500; }
.status button { width: 12px; height: 13px; display: grid; place-items: center; }
.status button svg { width: 8px; height: 8px; }
.hscroll { flex: 1; align-self: stretch; background: #3e3e3e; }
.scorner { width: 11px; align-self: stretch; background: #535353; }
.bottomtabs, .tabs { flex: none; display: flex; align-items: center; background: #383838; color: #999; font-weight: 700; }
.bottomtabs { height: 13px; border-top: 1px solid #2c2c2c; line-height: 12px; }
.bottomtabs a { padding: 0 5px; }
.bottomtabs .on, .tabs .on { background: #535353; color: #f0f0f0; }
.menu { width: 9px; height: 5px; margin: 0 1px 0 auto; }

/* collapsed dock */
.dock { position: relative; display: flex; flex-direction: column; background: #535353; border-right: 1px solid #333; }
.group { display: flex; flex-direction: column; align-items: center; padding: 3px 0 1px; border-bottom: 1px solid #3a3a3a; }
.group .grip { margin-bottom: 1px; }
.group button { display: grid; place-items: center; width: 18px; height: 18px; }
.group svg { width: 12px; height: 12px; }
.cursor { position: absolute; left: -6px; top: 334px; width: 14px; height: 8px; }

/* panels */
.panels { display: flex; flex-direction: column; background: #333; border-left: 1px solid #333; }
.panel { background: #535353; }
.panel + .panel { border-top: 1px solid #2c2c2c; }
.tabs { height: 12px; line-height: 12px; }
.tabs a { padding: 0 4px; }
.color { padding: 3px 11px 3px 3px; }
.colorrow { display: flex; gap: 5px; height: 48px; }
.color .swatches { margin-top: 1px; align-content: start; }
.channels { flex: 1; display: grid; grid-template-columns: 5px 60px 30px; align-content: space-between; align-items: center; gap: 0 2px; height: 45px; }
.channels input[type=text] { width: 30px; height: 12px; padding-left: 3px; background: #3c3c3c; border: 1px solid #383838; }
.channels input[type=range] { appearance: none; width: 60px; height: 12px; }
.channels ::-webkit-slider-runnable-track { height: 10px; background: linear-gradient(90deg, var(--c), #fff) 50% 0 / calc(100% - 6px) 4px no-repeat; }
.channels ::-webkit-slider-thumb { appearance: none; width: 6px; height: 6px; margin-top: 5px; background: #bbb; clip-path: polygon(50% 0, 100% 60%, 100% 100%, 0 100%, 0 60%); }
.cyan { --c: #0ff; }
.magenta { --c: #f0f; }
.yellow { --c: #ff0; }
.ramp { display: flex; height: 10px; border: 1px solid #222; }
.hues { flex: 1; background: linear-gradient(#fff9, transparent 45%, #0009), linear-gradient(90deg, #e00, #ff0 17%, #0a3 32%, #0cf 50%, #12b 67%, #d0a 83%, #e00); }
.ends { width: 5px; background: linear-gradient(#fff 50%, #000 50%); }
.adjust { padding: 2px 5px 3px; }
.adjust h2 { margin: 0; font-size: 7px; line-height: 10px; font-weight: 700; color: #fff; }
.icons { display: flex; justify-content: center; gap: 3px; height: 17px; align-items: center; padding-right: 11px; }
.icons svg { width: 12px; height: 12px; }
.layers { flex: 1; min-height: 0; display: flex; flex-direction: column; }
.lrow { flex: none; display: flex; align-items: center; height: 18px; padding: 0 3px; border-bottom: 1px solid #484848; color: #ccc; }
.lrow.filter { height: 17px; }
.kind { width: 44px; }
.blend { width: 69px; }
.ficons { flex: 1; display: flex; justify-content: space-between; padding: 0 11px 0 7px; opacity: .65; }
.ficons svg, .locks svg { width: 10px; height: 10px; }
.switch { width: 5px; height: 11px; background: linear-gradient(#777 50%, #3c3c3c 50%); border: 1px solid #3a3a3a; }
.lrow label { margin-left: auto; margin-right: 4px; }
.num { display: flex; width: 34px; height: 12px; }
.num input { width: 22px; padding-left: 2px; background: #4a4a4a; border: 1px solid #3e3e3e; color: #737373; }
.num button { width: 12px; display: grid; place-items: center; background: #606060; border: 1px solid #3e3e3e; }
.num svg { width: 5px; height: 4px; }
.locks { display: flex; gap: 4px; margin-left: 5px; }
.list { flex: 1; min-height: 0; margin-right: 9px; padding-top: 1px; background: #464646; border-right: 1px solid #383838; }
.layer { display: flex; height: 19px; }
.vis { width: 20px; display: grid; place-items: center; background: #535353; }
.vis svg { width: 9px; height: 8px; }
.lbody { flex: 1; display: flex; align-items: center; padding: 0 10px 0 2px; background: #53647c; }
.thumb { width: 20px; height: 13px; background: #fff; outline: 1px solid #222; }
.lbody em { flex: 1; margin-left: 7px; font-weight: 500; }
.lbody svg { width: 8px; height: 9px; }
.lfoot { flex: none; display: flex; justify-content: space-between; align-items: center; height: 13px; padding: 0 17px 0 11px; border-top: 1px solid #333; }
.lfoot svg { width: 10px; height: 10px; }
.lfoot i { color: #999; }
```
